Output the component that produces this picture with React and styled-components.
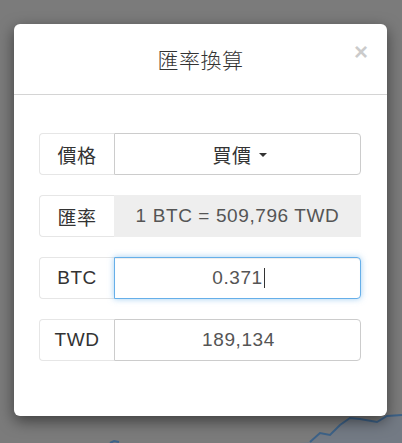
import React, { useState } from "react";
import styled, { createGlobalStyle } from "styled-components";

const GlobalStyle = createGlobalStyle`
  html, body {
    margin: 0;
    padding: 0;
  }
  body {
    font-family: "Liberation Sans", Arial, "Noto Sans CJK TC", sans-serif;
    color: #333;
  }
`;

const rows = [
  { id: "price", label: "價格", kind: "select", value: "買價" },
  { id: "rate", label: "匯率", kind: "readonly", value: "1 BTC = 509,796 TWD" },
  { id: "btc", label: "BTC", kind: "input", value: "0.371", focused: true },
  { id: "twd", label: "TWD", kind: "input", value: "189,134" },
];

export default function App() {
  const [values] = useState(rows);

  return (
    <PageStyled>
      <GlobalStyle />
      <ChartStyled viewBox="0 0 402 443" preserveAspectRatio="none">
        <path
          d="M300 443 L310 442 L320 433 L330 435 L340 425 L350 418 L360 419 L377 422 L387 416 L402 415 L402 443 Z"
          fill="#737a84"
        />
        <path
          d="M310 442 L320 433 L330 435 L340 425 L350 418 L360 419 L377 422 L387 416 L402 415"
          fill="none"
          stroke="#3d6288"
          strokeWidth="2"
        />
        <path d="M110 443 L114 441 L119 442" fill="none" stroke="#3d6288" strokeWidth="2" />
      </ChartStyled>

      <ModalStyled>
        <ModalHeaderStyled>
          <ModalTitleStyled>匯率換算</ModalTitleStyled>
          <CloseStyled aria-label="close">×</CloseStyled>
        </ModalHeaderStyled>
        <ModalBodyStyled>
          {values.map((row) => (
            <InputGroupStyled key={row.id}>
              <AddonStyled>{row.label}</AddonStyled>
              {row.kind === "select" && (
                <SelectButtonStyled>
                  {row.value}
                  <CaretStyled />
                </SelectButtonStyled>
              )}
              {row.kind === "readonly" && (
                <FieldStyled value={row.value} readOnly $readonly />
              )}
              {row.kind === "input" && (
                <FieldWrapStyled $focused={row.focused}>
                  <span>{row.value}</span>
                  {row.focused && <CursorStyled />}
                </FieldWrapStyled>
              )}
            </InputGroupStyled>
          ))}
        </ModalBodyStyled>
      </ModalStyled>
    </PageStyled>
  );
}

const PageStyled = styled.div`
  position: relative;
  width: 402px;
  height: 443px;
  overflow: hidden;
  padding-top: 24px;
  box-sizing: border-box;
  background-color: #7b7b7b;
  background-image: repeating-linear-gradient(
    to bottom,
    transparent 0,
    transparent 79px,
    #858585 79px,
    #858585 80px,
    transparent 80px,
    transparent 120px
  );
  background-size: 100% 60px;
  background-position: 0 19px;
`;

const ChartStyled = styled.svg`
  position: absolute;
  inset: 0;
  width: 402px;
  height: 443px;
`;

const ModalStyled = styled.div`
  position: relative;
  margin-left: 14px;
  width: 373px;
  height: 392px;
  background: #fff;
  border-radius: 6px;
  box-shadow: 0 5px 15px rgba(0, 0, 0, 0.5);
  box-sizing: border-box;
`;

const ModalHeaderStyled = styled.div`
  position: relative;
  height: 71px;
  display: flex;
  align-items: center;
  justify-content: center;
  border-bottom: 1px solid #d4d4d4;
  box-sizing: border-box;
`;

const ModalTitleStyled = styled.h4`
  margin: 0;
  font-family: "Noto Sans CJK TC", sans-serif;
  font-size: 21px;
  font-weight: 300;
  letter-spacing: 0.5px;
  color: #333;
  line-height: 1;
`;

const CloseStyled = styled.button`
  position: absolute;
  right: 19px;
  top: 16px;
  padding: 0;
  border: 0;
  background: transparent;
  font-family: "Liberation Sans", Arial, sans-serif;
  font-size: 24px;
  font-weight: 700;
  line-height: 1;
  color: #000;
  opacity: 0.2;
  cursor: pointer;
`;

const ModalBodyStyled = styled.div`
  padding: 38px 26px 0 25px;
  display: flex;
  flex-direction: column;
  gap: 20px;
`;

const InputGroupStyled = styled.div`
  display: flex;
  height: 42px;
`;

const AddonStyled = styled.div`
  width: 75px;
  flex: none;
  display: flex;
  align-items: center;
  justify-content: center;
  border: 1px solid #e6e6e6;
  border-right: 0;
  border-radius: 4px 0 0 4px;
  background: #fff;
  box-sizing: border-box;
  font-family: "Liberation Sans", Arial, "Noto Sans CJK TC", sans-serif;
  font-size: 19px;
  letter-spacing: 0.5px;
  color: #333;
`;

const fieldBase = `
  flex: 1;
  min-width: 0;
  height: 42px;
  box-sizing: border-box;
  border-radius: 0 4px 4px 0;
  font-family: "Liberation Sans", Arial, "Noto Sans CJK TC", sans-serif;
  font-size: 19px;
  letter-spacing: 0.6px;
  color: #555;
  text-align: center;
`;

const SelectButtonStyled = styled.button`
  ${fieldBase}
  display: flex;
  align-items: center;
  justify-content: center;
  gap: 7px;
  border: 1px solid #ccc;
  background: #fff;
  color: #333;
  padding: 0 0 0 4px;
  cursor: pointer;
`;

const CaretStyled = styled.span`
  display: inline-block;
  width: 0;
  height: 0;
  border-top: 4px solid #333;
  border-left: 4px solid transparent;
  border-right: 4px solid transparent;
  margin-top: 1px;
`;

const FieldStyled = styled.input`
  ${fieldBase}
  padding: 0;
  border: 1px solid ${({ $readonly }) => ($readonly ? "#eee" : "#ccc")};
  background: ${({ $readonly }) => ($readonly ? "#eee" : "#fff")};
  outline: none;
  border-radius: 0;
`;

const FieldWrapStyled = styled.div`
  ${fieldBase}
  display: flex;
  align-items: center;
  justify-content: center;
  background: #fff;
  border: 1px solid ${({ $focused }) => ($focused ? "#66afe9" : "#ccc")};
  ${({ $focused }) =>
    $focused &&
    `
    box-shadow: inset 0 1px 1px rgba(0,0,0,.075), 0 0 6px rgba(102,175,233,.6);
  `}
  padding-left: 2px;
`;

const CursorStyled = styled.span`
  display: inline-block;
  width: 1px;
  height: 20px;
  background: #333;
  margin-left: 1px;
`;
